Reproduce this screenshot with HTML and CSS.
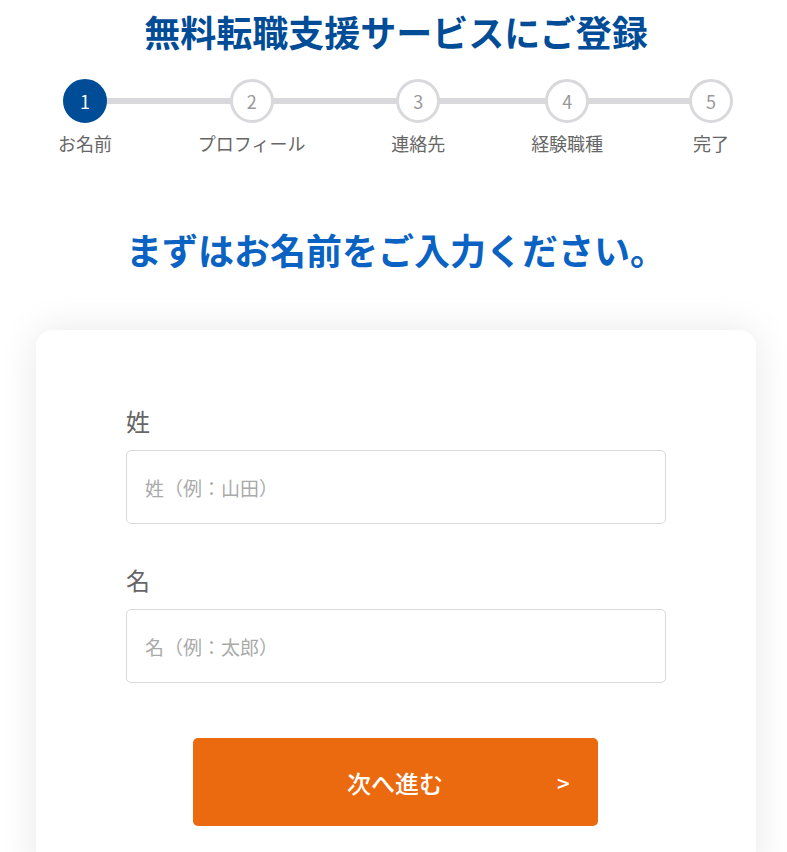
FILE: index.html
```html
<!DOCTYPE html>
<html lang="ja">
<head>
    <meta charset="utf-8">
    <title>無料転職支援サービスにご登録</title>
    <link rel="stylesheet" href="styles.css">
</head>
<body>
    <div class="page">
        <h1 class="page-title">無料転職支援サービスにご登録</h1>

        <ol class="stepper">
            <li class="step is-current"><span class="step-num">1</span><span class="step-label">お名前</span></li>
            <li class="step"><span class="step-num">2</span><span class="step-label">プロフィール</span></li>
            <li class="step"><span class="step-num">3</span><span class="step-label">連絡先</span></li>
            <li class="step"><span class="step-num">4</span><span class="step-label">経験職種</span></li>
            <li class="step"><span class="step-num">5</span><span class="step-label">完了</span></li>
        </ol>

        <h2 class="lead">まずはお名前をご入力ください。</h2>

        <form class="card" action="#" method="post">
            <label class="field-label" for="last-name">姓</label>
            <input class="field-input" type="text" id="last-name" name="last_name" placeholder="姓（例：山田）">

            <label class="field-label" for="first-name">名</label>
            <input class="field-input" type="text" id="first-name" name="first_name" placeholder="名（例：太郎）">

            <button class="next-btn" type="submit">次へ進む<span class="next-arrow">&gt;</span></button>
        </form>
    </div>
</body>
</html>
```

FILE: styles.css
```css
/* base */
body {
    margin: 0;
    background: #fff;
    font-family: "Noto Sans CJK JP", "Noto Sans", sans-serif;
    color: #333;
}

.page {
    width: 720px;
    margin-left: 36px;
    padding-top: 4px;
}

.page-title {
    margin: 0;
    font-size: 36px;
    line-height: 54px;
    font-weight: 700;
    text-align: center;
    color: #004c97;
}

/* progress steps */
.stepper {
    position: relative;
    display: flex;
    justify-content: space-between;
    list-style: none;
    margin: 21px 0 0;
    padding: 0 23px 0 22px;
}

.stepper::before {
    content: "";
    position: absolute;
    top: 19px;
    left: 49px;
    right: 46px;
    height: 6px;
    background: #d9d9dd;
}

.step {
    position: relative;
    display: flex;
    flex-direction: column;
    align-items: center;
}

.step-num {
    box-sizing: border-box;
    width: 44px;
    height: 44px;
    border: 3px solid #d9d9dd;
    border-radius: 50%;
    background: #fff;
    display: flex;
    align-items: center;
    justify-content: center;
    font-size: 18px;
    color: #999;
}

.step.is-current .step-num {
    border-color: #004c97;
    background: #004c97;
    color: #fff;
}

.step-label {
    margin-top: 8px;
    font-size: 18px;
    line-height: 25px;
    color: #666;
    white-space: nowrap;
}

.lead {
    margin: 66px 0 0;
    font-size: 36px;
    line-height: 54px;
    font-weight: 700;
    text-align: center;
    color: #0a63c3;
}

/* form card */
.card {
    display: flex;
    flex-direction: column;
    margin-top: 54px;
    padding: 73px 90px 60px;
    background: #fff;
    border-radius: 16px;
    box-shadow: 0 0 40px rgba(0, 0, 0, 0.09);
}

.field-label {
    font-size: 24px;
    line-height: 36px;
    color: #666;
}

.field-input {
    box-sizing: border-box;
    height: 74px;
    margin: 11px 0 38px;
    padding: 0 18px;
    border: 1px solid #d9d9d9;
    border-radius: 5px;
    font-family: inherit;
    font-size: 19px;
    color: #333;
    outline: none;
}

.field-input::placeholder {
    color: #aaa;
}

.card .field-input:last-of-type {
    margin-bottom: 55px;
}

.next-btn {
    position: relative;
    align-self: center;
    width: 405px;
    height: 88px;
    margin-left: -2px;
    border: none;
    border-radius: 5px;
    background: #ec6a0f;
    color: #fff;
    font-family: inherit;
    font-size: 24px;
    font-weight: 500;
    cursor: pointer;
}

.next-arrow {
    position: absolute;
    right: 28px;
    top: 50%;
    transform: translateY(-50%);
    font-size: 22px;
}
```
